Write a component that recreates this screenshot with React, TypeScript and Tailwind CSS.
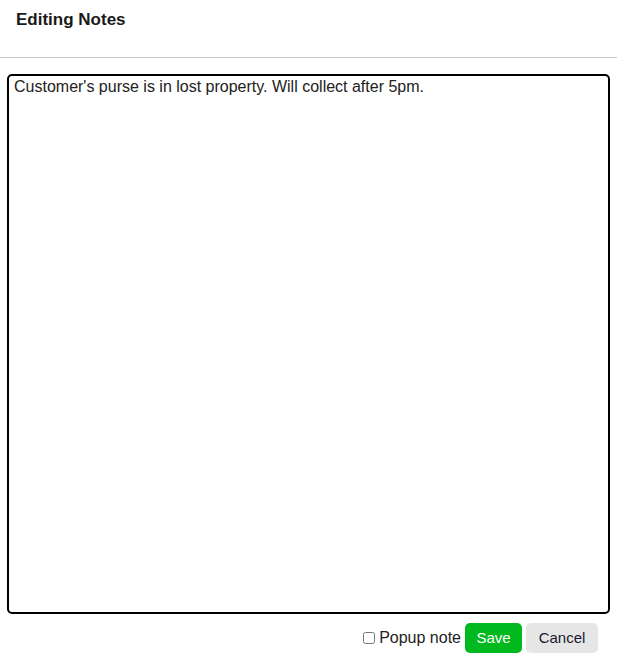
import { useState } from "react";

export default function App() {
  const [note, setNote] = useState(
    "Customer's purse is in lost property. Will collect after 5pm."
  );
  const [popup, setPopup] = useState(false);

  return (
    <div className="w-[617px] h-[663px] bg-white font-['Liberation_Sans',Arial,sans-serif] text-[#111]">
      <div className="h-[58px] border-b border-[#c8c8c8] px-4 pt-[9px]">
        <h1 className="text-[17px] font-semibold leading-[22px] text-[#1a1a1a]">Editing Notes</h1>
      </div>
      <div className="px-[7px] pt-[16px]">
        <textarea
          value={note}
          onChange={(e) => setNote(e.target.value)}
          className="block w-[603px] h-[540px] resize-none rounded-[5px] border-2 border-black px-[5px] py-[1px] text-[16px] leading-[20px] text-[#222] outline-none"
        />
      </div>
      <div className="flex items-center justify-end gap-[4px] pr-[19px] pt-[9px]">
        <label className="flex items-center gap-[4px] text-[16px] text-[#222]">
          <input
            type="checkbox"
            checked={popup}
            onChange={(e) => setPopup(e.target.checked)}
            className="h-[12px] w-[12px]"
          />
          Popup note
        </label>
        <button className="h-[30px] w-[57px] rounded-[5px] bg-[#00b91e] text-[15px] text-white">
          Save
        </button>
        <button className="h-[30px] w-[72px] rounded-[5px] bg-[#e6e6e6] text-[15px] text-[#1a1a2e]">
          Cancel
        </button>
      </div>
    </div>
  );
}
